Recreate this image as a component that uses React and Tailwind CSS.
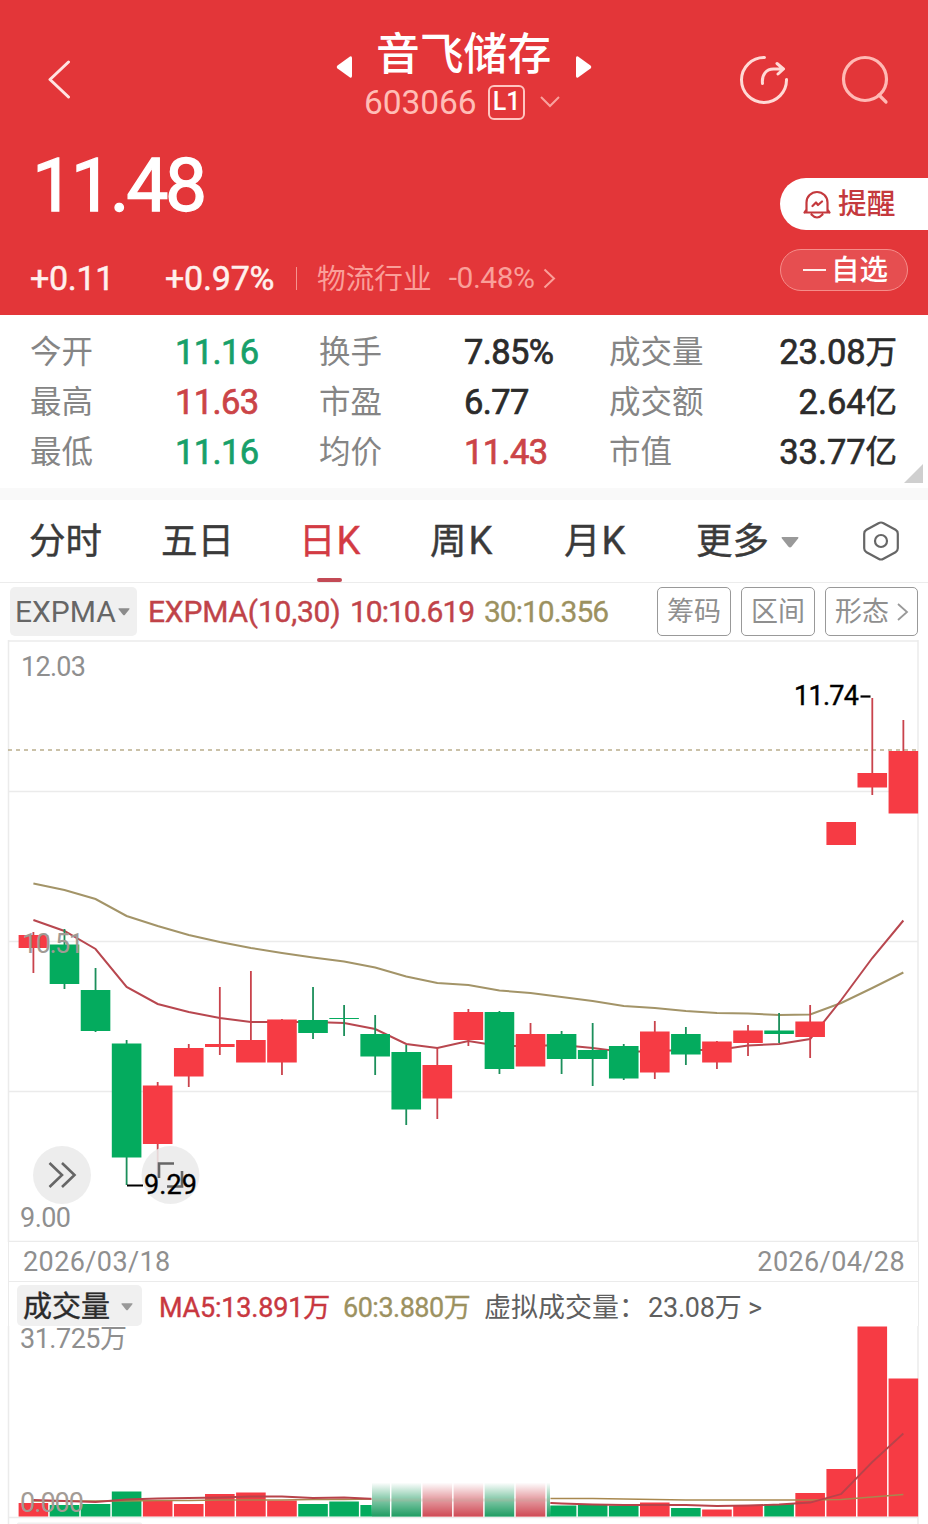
const CENTER = (i) => 33.4 + i * 31.07;
const RED = '#f63b44';
const GREEN = '#04ab5e';

// [up, bodyTop, bodyBottom, wickTop, wickBottom]
const CANDLES = [
  [1, 935, 948, 932, 973],
  [0, 944.5, 984, 929, 989],
  [0, 990, 1031, 968, 1032],
  [0, 1043.5, 1157.5, 1040, 1185],
  [1, 1085.5, 1144, 1082, 1178],
  [1, 1048, 1076.5, 1044, 1087],
  [1, 1044, 1047, 987, 1055],
  [1, 1040, 1062.5, 971, 1062],
  [1, 1019.5, 1062.5, 1019, 1075],
  [0, 1020, 1033, 987, 1039],
  [0, 1018, 1019, 1005, 1036],
  [0, 1034, 1056.5, 1015, 1075],
  [0, 1052, 1109.5, 1045, 1125],
  [1, 1065, 1098.5, 1048, 1119],
  [1, 1012, 1040, 1009, 1046],
  [0, 1012, 1069, 1011, 1074],
  [1, 1034, 1066.5, 1023, 1066],
  [0, 1034, 1059, 1031, 1074],
  [0, 1050, 1059, 1023, 1086],
  [0, 1046, 1078.5, 1044, 1080],
  [1, 1031.5, 1072.5, 1021, 1079],
  [0, 1034, 1054.5, 1027, 1065],
  [1, 1041.5, 1062.5, 1041, 1069],
  [1, 1030.5, 1043, 1025, 1056],
  [0, 1030.5, 1034, 1013, 1043],
  [1, 1021.5, 1037, 1005, 1058],
  [1, 822, 845, 822, 845],
  [1, 773, 787.5, 698, 795],
  [1, 751, 813.5, 720, 813],
];

const FAST = [920, 931, 949, 987, 1004, 1012, 1018, 1022, 1022, 1022, 1023, 1029, 1044, 1048, 1041, 1046, 1046, 1045, 1048, 1052, 1051, 1050, 1050, 1045.5, 1044, 1039, 1000, 958, 920.5];
const SLOW = [883.5, 890, 899, 916, 926, 935, 942, 948, 953, 957.5, 961.5, 967.5, 976.5, 983, 985, 990.5, 993, 997, 1001, 1006, 1008, 1011, 1013, 1013.5, 1015, 1014.5, 1003, 988, 972.5];

// [up, top]
const VOLUMES = [
  [1, 1503], [0, 1505], [0, 1504], [0, 1491.5], [1, 1500], [1, 1504], [1, 1494], [1, 1492.5], [1, 1500.5], [0, 1504],
  [0, 1501.5], [0, 1505], [0, 1494], [1, 1494], [1, 1494], [0, 1494], [1, 1494], [0, 1505.5], [0, 1504], [0, 1505.5],
  [1, 1502.5], [0, 1508], [1, 1509.5], [1, 1505.5], [0, 1504], [1, 1493], [1, 1469], [1, 1326.5], [1, 1378.5],
];
const MA5 = [1500, 1501, 1502, 1499.5, 1498.5, 1498, 1497.5, 1496.5, 1496.5, 1498, 1497.5, 1499, 1500, 1500, 1500, 1501, 1502, 1503.5, 1504.5, 1505, 1505, 1505, 1506, 1505.5, 1504.5, 1502.5, 1494, 1462, 1433.5];
const MA60 = [1501, 1501, 1501, 1501, 1500.5, 1500.5, 1500, 1500, 1500, 1499.5, 1499.5, 1499, 1499, 1499, 1498.5, 1498.5, 1498.5, 1498.5, 1498.5, 1499, 1499.5, 1500, 1500, 1500, 1500, 1500, 1499.5, 1497, 1494.5];

const points = (ys, dy) => ys.map((y, i) => `${CENTER(i)},${y - dy}`).join(' ');

function Caret({ className }) {
  return (
    <svg viewBox="0 0 18 11" className={className} fill="currentColor">
      <path d="M1.5 0h15q1.6 0 .6 1.5l-6.6 8.2q-1.5 1.5-3 0L.9 1.5Q-.1 0 1.5 0z" />
    </svg>
  );
}

function Header() {
  return (
    <header className="h-[315px] bg-[#e33639] text-white">
      <div className="grid h-[130px] grid-cols-[300px_328px_300px]">
        <div className="pt-[60px] pl-[47px]">
          <svg className="h-[39px] w-[24px]" viewBox="0 0 24 39" fill="none" stroke="#ffe4e2" strokeWidth="3" strokeLinecap="round" strokeLinejoin="round">
            <path d="M21.500 2 3 19.500 21.500 37" />
          </svg>
        </div>
        <div className="flex flex-col items-center">
          <div className="mt-[29px] flex h-[52px] items-center">
            <svg className="mt-[23px] h-[22px] w-[17px]" viewBox="0 0 17 22" fill="currentColor">
              <path d="M14 .5q2-.8 2 1.500v18q0 2.300-2 1.500L1.500 12.500q-1.500-1.500 0-3z" />
            </svg>
            <h1 className="mr-[24px] ml-[23px] w-[175px] text-center text-[43.800px] leading-[52px] font-medium whitespace-nowrap">音飞储存</h1>
            <svg className="mt-[23px] h-[22px] w-[17px]" viewBox="0 0 17 22" fill="currentColor">
              <path d="M3 .5Q1-.3 1 2v18q0 2.300 2 1.500l12.500-9q1.500-1.500 0-3z" />
            </svg>
          </div>
          <div className="mt-[4px] mr-[4px] flex h-[34px] items-center">
            <span className="w-[113px] pt-[2px] text-[33.500px] tracking-[-0.1px] text-[#ffbdb6]">603066</span>
            <span className="ml-[11px] flex h-[35px] w-[37px] items-center justify-center rounded-[6px] border-2 border-[#ffc5c0] text-[25px] font-medium">L1</span>
            <svg className="ml-[15px] h-[12px] w-[20px]" viewBox="0 0 20 12" fill="none" stroke="#f9a29e" strokeWidth="2">
              <path d="M1 1l9 9 9-9" />
            </svg>
          </div>
        </div>
        <div className="flex gap-[52px] pt-[55px] pl-[111px]">
          <svg className="h-[50px] w-[50px]" viewBox="0 0 50 50" fill="none" stroke="#ffdad6" strokeWidth="3" strokeLinecap="round" strokeLinejoin="round">
            <path d="M25.500 2.500A22.500 22.500 0 1 0 47.500 24.500" />
            <path d="M23.500 28.500c-1-9 4-14.500 11-14.500h9.500M38 8.500l6.500 5.500-5.500 5" />
          </svg>
          <svg className="h-[50px] w-[50px]" viewBox="0 0 50 50" fill="none" stroke="#ffb9b4" strokeWidth="3.200" strokeLinecap="round">
            <circle cx="24" cy="24" r="21.500" />
            <path d="M38 40l7 7" />
          </svg>
        </div>
      </div>
      <div className="flex">
        <div className="flex-1">
          <div className="flex h-[109px] items-center pt-[2px] pl-[32px] text-[75px] tracking-[-3.300px] [-webkit-text-stroke:1.300px_white]">11.48</div>
          <div className="flex h-[78px] items-center text-[34px] leading-none">
            <span className="ml-[30px] w-[135px] tracking-[-0.300px] text-[#fff0ed] [-webkit-text-stroke:0.500px_#fff0ed]">+0.11</span>
            <span className="w-[131px] tracking-[-0.200px] text-[#fff0ed] [-webkit-text-stroke:0.500px_#fff0ed]">+0.97%</span>
            <span className="h-[23px] w-px bg-[#f5938f]" />
            <span className="ml-[20px] pt-[2px] text-[28.700px] text-[#fa9f99]">物流行业</span>
            <span className="ml-[17px] text-[30px] tracking-[-0.500px] text-[#fa9f99]">-0.48%</span>
            <svg className="ml-[8px] h-[21px] w-[13px]" viewBox="0 0 13 21" fill="none" stroke="#fa9f99" strokeWidth="2">
              <path d="M1.500 1.500 11 10.500 1.500 19.500" />
            </svg>
          </div>
        </div>
        <div className="w-[148px] pt-[48px]">
          <button className="flex h-[52px] w-[148px] items-center rounded-l-full bg-white pl-[23px] text-[#c4393d]">
            <svg className="h-[29px] w-[28px]" viewBox="0 0 28 29" fill="none" stroke="currentColor" strokeWidth="2.200" strokeLinecap="round" strokeLinejoin="round">
              <path d="M3.500 21V12.500a10.500 10.500 0 0 1 21 0V21M1.500 22.500h25M1.500 22.500l2-3M26.500 22.500l-2-3M8.500 24.500q5.500 6 11 0M9.500 16l3.500-3.500 2 2.500 4-3.500" />
            </svg>
            <span className="ml-[7px] pt-[1px] text-[28.700px] leading-none font-medium">提醒</span>
          </button>
          <button className="mt-[19px] flex h-[42px] w-[128px] items-center rounded-full border-[1.500px] border-[#f58d8a] bg-[#e64e50] pl-[22px]">
            <span className="h-[2.500px] w-[23px] bg-[#fff0ed]" />
            <span className="ml-[5px] pt-[2px] text-[28.500px] leading-none font-medium">自选</span>
          </button>
        </div>
      </div>
    </header>
  );
}

const STATS = [
  ['今开', '11.16', 'text-[#17a06a]', '换手', '7.85%', 'text-[#2b2b2b]', '成交量', '23.08', '万'],
  ['最高', '11.63', 'text-[#cb4447]', '市盈', '6.77', 'text-[#2b2b2b]', '成交额', '2.64', '亿'],
  ['最低', '11.16', 'text-[#17a06a]', '均价', '11.43', 'text-[#cb4447]', '市值', '33.77', '亿'],
];

function Stats() {
  return (
    <section className="relative h-[173px] bg-white pt-[12px]">
      {STATS.map(([l1, v1, c1, l2, v2, c2, l3, v3, unit]) => (
        <div key={l1} className="grid h-[50px] grid-cols-[145px_144px_144px_146px_1fr_auto] items-center pr-[31px] pl-[30px] text-[31.500px] leading-none text-[#858585]">
          <span className="pt-[2px]">{l1}</span>
          <span className={`text-[34.500px] tracking-[-0.600px] [-webkit-text-stroke:0.700px_currentColor] ${c1}`}>{v1}</span>
          <span className="pt-[2px]">{l2}</span>
          <span className={`pl-[1px] text-[34.500px] tracking-[-0.600px] [-webkit-text-stroke:0.700px_currentColor] ${c2}`}>{v2}</span>
          <span className="pt-[2px]">{l3}</span>
          <span className="flex items-center text-[#2b2b2b] [-webkit-text-stroke:0.600px_currentColor]">
            <span className="text-[34.500px] tracking-[-0.100px]">{v3}</span>
            <span className="pt-[2px]">{unit}</span>
          </span>
        </div>
      ))}
      <svg className="absolute right-[5px] bottom-[5px] h-[19px] w-[19px]" viewBox="0 0 19 19" fill="#cfcfcf">
        <path d="M19 0v19H0z" />
      </svg>
    </section>
  );
}

function Tabs() {
  return (
    <nav className="flex h-[83px] items-center border-b border-[#ececec] bg-white pl-[29px] text-[36.500px] leading-none text-[#3a3a3a] [-webkit-text-stroke:0.400px_currentColor]">
      <span className="w-[132px] pt-[3px]">分时</span>
      <span className="w-[138px] pt-[3px]">五日</span>
      <span className="relative flex h-full w-[131px] items-center pt-[3px] text-[#d33b43]">
        日<span className="mb-[3px] ml-px text-[38px]">K</span>
        <span className="absolute bottom-0 left-[18px] h-[4px] w-[25px] rounded-sm bg-[#c34a55]" />
      </span>
      <span className="flex w-[134px] items-center pt-[3px]">周<span className="mb-[3px] ml-[2px] text-[38px]">K</span></span>
      <span className="flex w-[132px] items-center pt-[3px]">月<span className="mb-[3px] ml-px text-[38px]">K</span></span>
      <span className="w-[73px] pt-[3px]">更多</span>
      <Caret className="mt-[2px] ml-[12px] h-[11px] w-[18px] text-[#999999]" />
      <svg className="ml-[63px] h-[40px] w-[38px]" viewBox="0 0 38 40" fill="none" stroke="#666" strokeWidth="2.200" strokeLinejoin="round">
        <path d="M16.500 2.200q2.500-1.400 5 0l12 6.600q2.300 1.300 2.300 3.900v14.600q0 2.600-2.300 3.900l-12 6.600q-2.500 1.400-5 0l-12-6.600q-2.300-1.300-2.300-3.900V12.700q0-2.600 2.300-3.900z" />
        <circle cx="19" cy="20" r="6" />
      </svg>
    </nav>
  );
}

function IndicatorBar() {
  return (
    <div className="flex h-[57px] items-center bg-white pt-0 pl-[10px] text-[30px] leading-none whitespace-nowrap">
      <div className="flex h-[49px] w-[127px] items-center rounded-[5px] bg-[#f0f0f0] pl-[5px] text-[#666]">
        <span className="w-[101px]">EXPMA</span>
        <Caret className="ml-[2px] h-[8px] w-[12px] text-[#8c8c8c]" />
      </div>
      <span className="ml-[11px] w-[202px] tracking-[-0.200px] text-[#c04349] [-webkit-text-stroke:0.400px_currentColor]">EXPMA(10,30)</span>
      <span className="w-[134px] tracking-[-1px] text-[#c04349] [-webkit-text-stroke:0.400px_currentColor]">10:10.619</span>
      <span className="w-[173px] tracking-[-1px] text-[#9c9160] [-webkit-text-stroke:0.300px_currentColor]">30:10.356</span>
      <div className="flex gap-[10px] text-[27px] text-[#8f8f8f]">
        <button className="flex h-[49px] w-[74px] items-center justify-center rounded-[5px] border-[1.500px] border-[#999] pt-[2px]">筹码</button>
        <button className="flex h-[49px] w-[74px] items-center justify-center rounded-[5px] border-[1.500px] border-[#999] pt-[2px]">区间</button>
        <button className="flex h-[49px] w-[93px] items-center rounded-[5px] border-[1.500px] border-[#999] pt-[2px] pl-[9px]">
          形态
          <svg className="mb-[2px] ml-[8px] h-[18px] w-[12px]" viewBox="0 0 12 18" fill="none" stroke="#999" strokeWidth="1.800">
            <path d="M1 1l9 8-9 8" />
          </svg>
        </button>
      </div>
    </div>
  );
}

function CandleChart() {
  const top = 640;
  return (
    <svg className="block h-[602px] w-[928px] bg-white" viewBox="0 0 928 602" fontSize="27">
      <g stroke="#ebebeb" strokeWidth="1.500">
        <path d="M8 1H918M8 151.500H918M8 301.500H918M8 451.500H918M8 601.500H918M8.500 0V602M918 0V602" />
      </g>
      <path d="M8 110H918" stroke="#b9ad8c" strokeWidth="1.500" strokeDasharray="4 4" />
      <polyline points={points(SLOW, top)} fill="none" stroke="#a39468" strokeWidth="2" />
      <polyline points={points(FAST, top)} fill="none" stroke="#b8474f" strokeWidth="2" />
      {CANDLES.map(([up, bt, bb, wt, wb], i) => (
        <g key={i} fill={up ? RED : GREEN}>
          <rect x={CENTER(i) - 0.9} y={wt - top} width="1.800" height={wb - wt} fill={up ? '#c9434c' : '#1c8f5b'} />
          <rect x={CENTER(i) - 14.8} y={bt - top} width="29.600" height={bb - bt} />
        </g>
      ))}
      <text x="21" y="36" fill="#8f8f8f" textLength="65">12.03</text>
      <text x="22" y="313" fill="#a09a94" textLength="62">10.51</text>
      <text x="20" y="587" fill="#8f8f8f" textLength="51">9.00</text>
      <text x="794" y="65" fill="#000" stroke="#000" strokeWidth="0.400" textLength="65">11.74</text>
      <path d="M860.500 56.500h10" stroke="#000" strokeWidth="2.200" />
      <g fill="#ebebeb" fillOpacity="0.880">
        <circle cx="62" cy="535" r="29" />
        <circle cx="170.500" cy="535" r="29" />
      </g>
      <g fill="none" stroke="#666" strokeWidth="2.600">
        <path d="M49.500 523l12.500 12-12.500 12M62 523l12.500 12L62 547" />
        <path d="M159 538V523.500h15M182 531v15.500h-15" />
      </g>
      <path d="M127 545.500h16" stroke="#000" strokeWidth="2" />
      <text x="144" y="554" fill="#000" stroke="#000" strokeWidth="0.400" textLength="53">9.29</text>
    </svg>
  );
}

function VolumeChart() {
  const top = 1326;
  return (
    <svg className="block h-[198px] w-[928px] overflow-visible" viewBox="0 0 928 198" fontSize="27">
      <defs>
        <linearGradient id="fade" x1="0" y1="0" x2="0" y2="1">
          <stop offset="0" stopColor="#fff" stopOpacity="1" />
          <stop offset="0.500" stopColor="#fff" stopOpacity="0.450" />
          <stop offset="1" stopColor="#fff" stopOpacity="0" />
        </linearGradient>
      </defs>
      <path d="M8.500 0V198M918 0V198M8 191.500H918" stroke="#ebebeb" strokeWidth="1.500" />
      {VOLUMES.map(([up, y], i) => (
        <rect key={i} x={CENTER(i) - 14.8} y={y - top} width="29.600" height={1516.5 - y} fill={up ? RED : GREEN} />
      ))}
      <polyline points={points(MA60, top)} fill="none" stroke="#a8884f" strokeWidth="1.700" />
      <polyline points={points(MA5, top)} fill="none" stroke="#b8434a" strokeWidth="1.800" />
      <rect x="372" y="157" width="178" height="33.500" fill="#fff" />
      {[11, 12, 13, 14, 15, 16, 17].map((i) => {
        const left = i === 11 ? 372 : CENTER(i) - 14.8;
        const right = i === 17 ? 550 : CENTER(i) + 14.8;
        return <rect key={i} x={left} y="157" width={right - left} height="33.500" fill={VOLUMES[i][0] ? '#cf4a55' : '#1f9c62'} />;
      })}
      <path d="M372 174H550" stroke="#8a6a50" strokeOpacity="0.250" strokeWidth="3" />
      <rect x="371" y="156.500" width="180" height="34" fill="url(#fade)" />
      <text x="20" y="22" fill="#8f8f8f" textLength="107">31.725万</text>
      <text x="20" y="186" fill="#a39b95" textLength="64">0.000</text>
      <rect x="17" y="196.500" width="125" height="3" rx="1.500" fill="#f0f0f0" />
    </svg>
  );
}

export default function App() {
  return (
    <main className="h-[1524px] w-[928px] overflow-hidden bg-white [font-family:Roboto,'Noto_Sans_CJK_SC',sans-serif]">
      <Header />
      <Stats />
      <div className="h-[12px] bg-[#f9f9f9]" />
      <Tabs />
      <IndicatorBar />
      <CandleChart />
      <div className="mx-[8px] flex h-[40px] w-[911px] items-center justify-between border-x border-b border-[#ebebeb] pt-[2px] pr-[13px] pl-[14px] text-[27px] leading-none tracking-[0.400px] text-[#8f8f8f]">
        <span>2026/03/18</span>
        <span>2026/04/28</span>
      </div>
      <div className="mx-[8px] flex h-[44px] w-[911px] items-center border-x border-[#ebebeb] pt-[3px] pl-[8px] text-[27px] leading-none whitespace-nowrap">
        <div className="flex h-[41px] w-[125px] items-center rounded-[5px] bg-[#f0f0f0] pt-[4px] pl-[6px] text-[29px] text-[#2b2b2b]">
          <span className="w-[98px] [-webkit-text-stroke:0.400px_currentColor]">成交量</span>
          <Caret className="mb-[2px] h-[8px] w-[12px] text-[#999]" />
        </div>
        <span className="ml-[17px] w-[184px] pt-[5px] tracking-[-0.200px] text-[#c8373f] [-webkit-text-stroke:0.400px_currentColor]">MA5:13.891万</span>
        <span className="w-[141px] pt-[5px] tracking-[-0.500px] text-[#9c9160] [-webkit-text-stroke:0.300px_currentColor]">60:3.880万</span>
        <span className="w-[164px] pt-[5px] text-[#5f5f5f]">虚拟成交量：</span>
        <span className="pt-[5px] tracking-[-0.200px] text-[#5f5f5f]">23.08万 &gt;</span>
      </div>
      <VolumeChart />
    </main>
  );
}
